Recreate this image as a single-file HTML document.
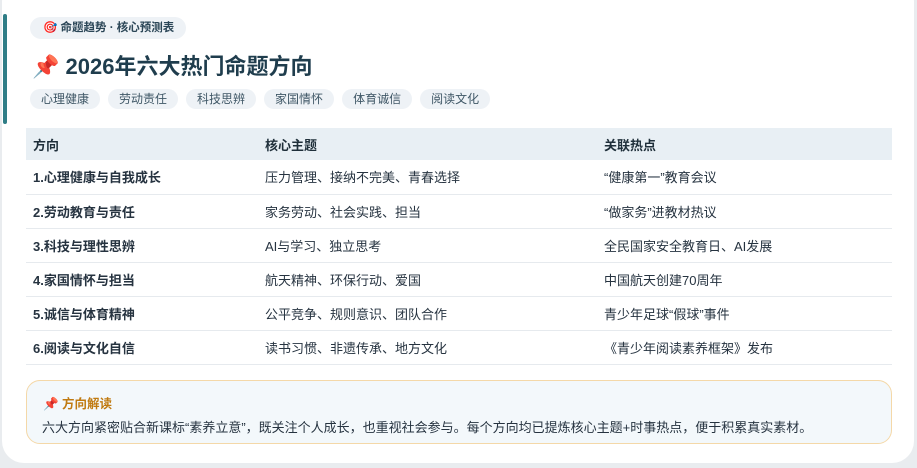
<!DOCTYPE html><html><head><meta charset="utf-8"><style>
*{margin:0;padding:0;box-sizing:border-box}
body{width:917px;height:468px;background:#e9ecef;font-family:"Liberation Sans","Noto Sans CJK SC",sans-serif;position:relative;overflow:hidden}
.card{position:absolute;left:2px;top:-20px;width:912px;height:483px;background:#fff;border-radius:22px}
.bar{position:absolute;left:3px;top:14px;width:4px;height:110px;background:#2f7d86;border-radius:2px}
.badge{position:absolute;left:30px;top:17px;height:22px;padding:0 12px 0 13px;background:#eef2f6;border-radius:11px;font-size:11.5px;font-weight:bold;color:#2b4657;line-height:22px}
h1{position:absolute;left:32px;top:52px;font-size:22px;font-weight:bold;color:#1f3d4d;line-height:30px}
.tags{position:absolute;left:30px;top:89px;display:flex;gap:8px}
.tags span{background:#eef2f6;border-radius:10px;font-size:12px;color:#3f5766;height:20px;line-height:20px;padding:0 11px}
table{position:absolute;left:26px;top:128px;width:866px;border-collapse:collapse;font-size:13px;color:#263340}
th{background:#e8eff4;height:32px;text-align:left;font-weight:bold;padding-left:7px;color:#1f2f3a}
td{height:34px;border-bottom:1px solid #e6eaee;padding-left:7px}
td:first-child{font-weight:bold}
.call{position:absolute;left:26px;top:380px;width:866px;height:64px;background:#f3f8fb;border:1px solid #f4d8a8;border-radius:14px}
.call b{position:absolute;left:16px;top:12px;font-size:12.5px;color:#c07a10}
.call p{position:absolute;left:15px;top:36px;font-size:13px;color:#263340}
</style></head><body>
<div class="card"></div><div class="bar"></div>
<div class="badge">🎯 命题趋势 · 核心预测表</div>
<h1>📌 2026年六大热门命题方向</h1>
<div class="tags"><span>心理健康</span><span>劳动责任</span><span>科技思辨</span><span>家国情怀</span><span>体育诚信</span><span>阅读文化</span></div>
<table>
<tr><th style="width:232px">方向</th><th style="width:339px">核心主题</th><th>关联热点</th></tr>
<tr><td>1.心理健康与自我成长</td><td>压力管理、接纳不完美、青春选择</td><td>“健康第一”教育会议</td></tr>
<tr><td>2.劳动教育与责任</td><td>家务劳动、社会实践、担当</td><td>“做家务”进教材热议</td></tr>
<tr><td>3.科技与理性思辨</td><td>AI与学习、独立思考</td><td>全民国家安全教育日、AI发展</td></tr>
<tr><td>4.家国情怀与担当</td><td>航天精神、环保行动、爱国</td><td>中国航天创建70周年</td></tr>
<tr><td>5.诚信与体育精神</td><td>公平竞争、规则意识、团队合作</td><td>青少年足球“假球”事件</td></tr>
<tr><td>6.阅读与文化自信</td><td>读书习惯、非遗传承、地方文化</td><td>《青少年阅读素养框架》发布</td></tr>
</table>
<div class="call"><b>📌 方向解读</b><p>六大方向紧密贴合新课标“素养立意”，既关注个人成长，也重视社会参与。每个方向均已提炼核心主题+时事热点，便于积累真实素材。</p></div>
</body></html>
